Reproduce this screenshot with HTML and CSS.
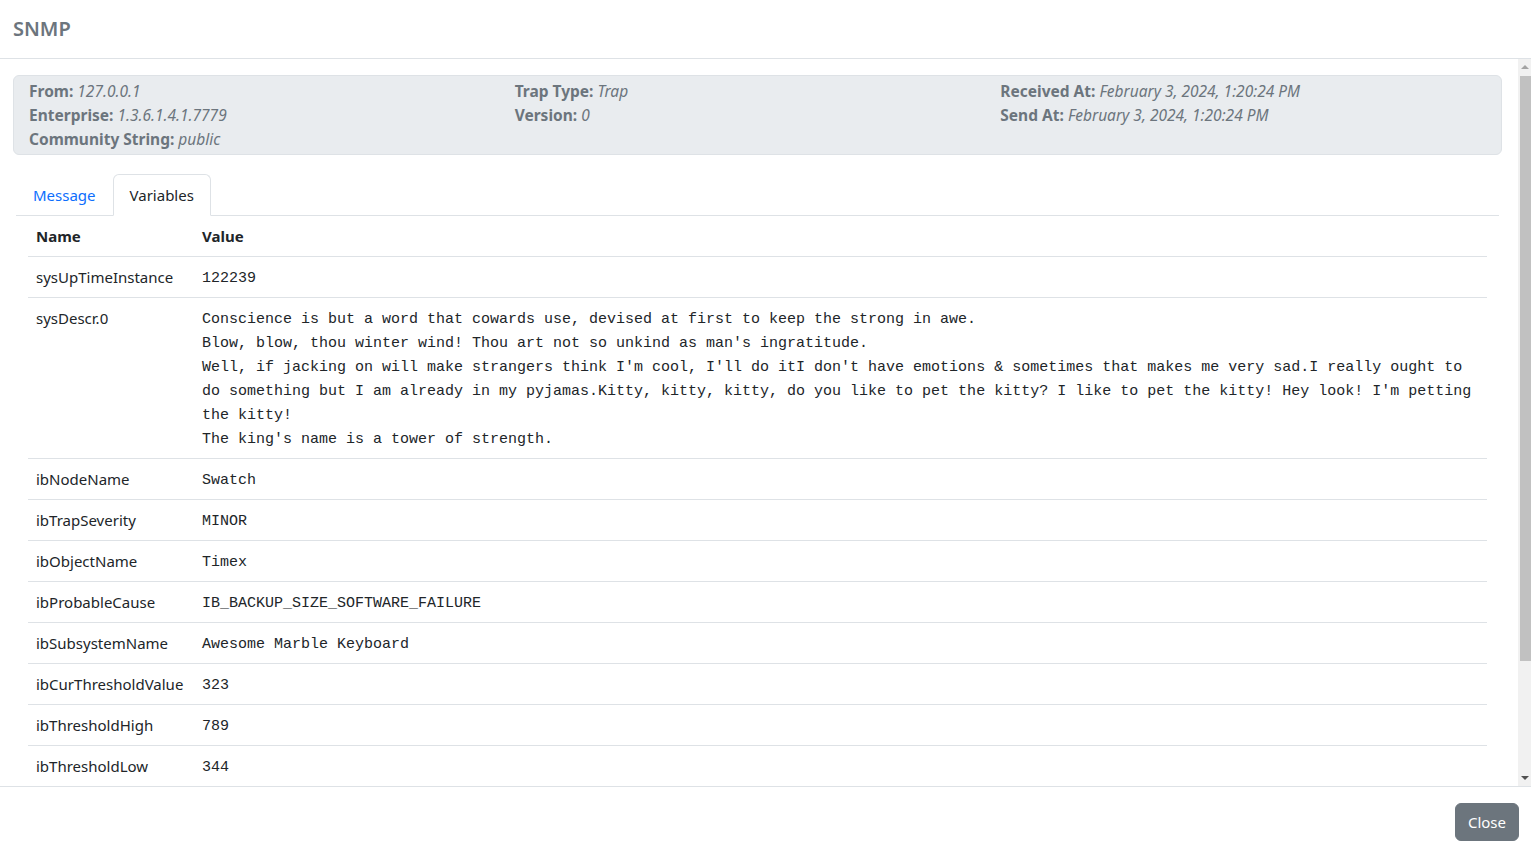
FILE: index.html
```html
<!DOCTYPE html>
<html lang="en">
<head>
<meta charset="utf-8">
<title>SNMP</title>
<link rel="stylesheet" href="styles.css">
</head>
<body>
<div class="modal">
  <header class="modal-header">
    <h5 class="modal-title">SNMP</h5>
  </header>
  <div class="body-wrap">
    <main class="modal-body">
      <section class="trap-info">
        <div class="info-col">
          <div><span class="lbl">From:</span> <em>127.0.0.1</em></div>
          <div><span class="lbl">Enterprise:</span> <em>1.3.6.1.4.1.7779</em></div>
          <div><span class="lbl">Community String:</span> <em>public</em></div>
        </div>
        <div class="info-col">
          <div><span class="lbl">Trap Type:</span> <em>Trap</em></div>
          <div><span class="lbl">Version:</span> <em>0</em></div>
        </div>
        <div class="info-col">
          <div><span class="lbl">Received At:</span> <em>February 3, 2024, 1:20:24 PM</em></div>
          <div><span class="lbl">Send At:</span> <em>February 3, 2024, 1:20:24 PM</em></div>
        </div>
      </section>
      <nav class="tabs">
        <a class="tab" href="#">Message</a>
        <a class="tab active" href="#">Variables</a>
      </nav>
      <div class="tab-content">
        <table class="vars">
          <thead>
            <tr><th class="name-col">Name</th><th>Value</th></tr>
          </thead>
          <tbody>
            <tr><td>sysUpTimeInstance</td><td class="val">122239</td></tr>
            <tr><td>sysDescr.0</td><td class="val">Conscience is but a word that cowards use, devised at first to keep the strong in awe.
Blow, blow, thou winter wind! Thou art not so unkind as man's ingratitude.
Well, if jacking on will make strangers think I'm cool, I'll do itI don't have emotions &amp; sometimes that makes me very sad.I really ought to do something but I am already in my pyjamas.Kitty, kitty, kitty, do you like to pet the kitty? I like to pet the kitty! Hey look! I'm petting the kitty!
The king's name is a tower of strength.</td></tr>
            <tr><td>ibNodeName</td><td class="val">Swatch</td></tr>
            <tr><td>ibTrapSeverity</td><td class="val">MINOR</td></tr>
            <tr><td>ibObjectName</td><td class="val">Timex</td></tr>
            <tr><td>ibProbableCause</td><td class="val">IB_BACKUP_SIZE_SOFTWARE_FAILURE</td></tr>
            <tr><td>ibSubsystemName</td><td class="val">Awesome Marble Keyboard</td></tr>
            <tr><td>ibCurThresholdValue</td><td class="val">323</td></tr>
            <tr><td>ibThresholdHigh</td><td class="val">789</td></tr>
            <tr><td>ibThresholdLow</td><td class="val">344</td></tr>
          </tbody>
        </table>
      </div>
    </main>
    <div class="scrollbar" aria-hidden="true">
      <span class="sb-arrow sb-up"></span>
      <span class="sb-thumb"></span>
      <span class="sb-arrow sb-down"></span>
    </div>
  </div>
  <footer class="modal-footer">
    <button class="btn-close" type="button">Close</button>
  </footer>
</div>
</body>
</html>
```

FILE: styles.css
```css
html, body {
  margin: 0;
  height: 100%;
}
body {
  font-family: "Noto Sans", "Open Sans", sans-serif;
  font-size: 15px;
  line-height: 24px;
  color: #212529;
  background: #fff;
  overflow: hidden;
}
.modal {
  display: flex;
  flex-direction: column;
  height: 100%;
}
.modal-header {
  padding: 16px 16px 16px 13px;
  border-bottom: 1px solid #dee2e6;
  flex: none;
}
.modal-title {
  margin: 0;
  font-size: 20px;
  line-height: 26px;
  font-weight: 600;
  color: #6c757d;
}
.body-wrap {
  flex: 1;
  min-height: 0;
  position: relative;
  display: flex;
}
.modal-body {
  flex: 1;
  min-width: 0;
  overflow-y: auto;
  scrollbar-width: none;
  padding: 16px 29px 16px 13px;
}
.modal-body::-webkit-scrollbar {
  display: none;
}
.scrollbar {
  position: absolute;
  top: 0;
  right: 0;
  bottom: 0;
  width: 13px;
  background: #f1f1f1;
}
.sb-thumb {
  position: absolute;
  top: 17px;
  left: 2px;
  right: 0;
  height: 585px;
  background: #c1c1c1;
}
.sb-arrow {
  position: absolute;
  left: 3px;
  width: 0;
  height: 0;
  border-left: 4px solid transparent;
  border-right: 4px solid transparent;
}
.sb-up {
  top: 6px;
  border-bottom: 4px solid #a3a3a3;
}
.sb-down {
  bottom: 6px;
  border-top: 4px solid #505050;
}
.trap-info {
  display: grid;
  grid-template-columns: repeat(3, 1fr);
  background: #e9ecef;
  border: 1px solid #dee2e6;
  border-radius: 6px;
  padding: 3px 15px;
  margin-bottom: 19px;
  color: #6c757d;
  font-size: 15.5px;
}
.trap-info .lbl {
  font-weight: 700;
}
.trap-info em {
  font-style: italic;
}
.tabs {
  display: flex;
  margin: 0 3px;
  border-bottom: 1px solid #dee2e6;
}
.tab {
  display: block;
  padding: 8px 16px;
  border: 1px solid transparent;
  border-radius: 6px 6px 0 0;
  margin-bottom: -1px;
  color: #0d6efd;
  text-decoration: none;
}
.tab.active {
  color: #212529;
  background: #fff;
  border-color: #dee2e6 #dee2e6 #fff;
}
.tab-content {
  padding: 0 15px 120px;
}
.vars {
  width: 100%;
  border-collapse: collapse;
}
.vars th, .vars td {
  text-align: left;
  vertical-align: top;
  padding: 8px;
  border-bottom: 1px solid #dee2e6;
}
.vars th {
  font-weight: 700;
}
.vars .name-col {
  width: 150px;
}
.vars td:first-child {
  white-space: nowrap;
}
.vars .val {
  font-family: "Liberation Mono", "DejaVu Sans Mono", monospace;
  font-size: 15px;
  line-height: 24px;
  white-space: pre-wrap;
  padding-top: 10px;
  padding-bottom: 6px;
}
.modal-footer {
  flex: none;
  border-top: 1px solid #dee2e6;
  padding: 16px 12px 14px;
  display: flex;
  justify-content: flex-end;
}
.btn-close {
  font-family: inherit;
  font-size: 15px;
  line-height: 24px;
  padding: 6px 12px;
  color: #fff;
  background: #6c757d;
  border: 1px solid #6c757d;
  border-radius: 6px;
}
```
